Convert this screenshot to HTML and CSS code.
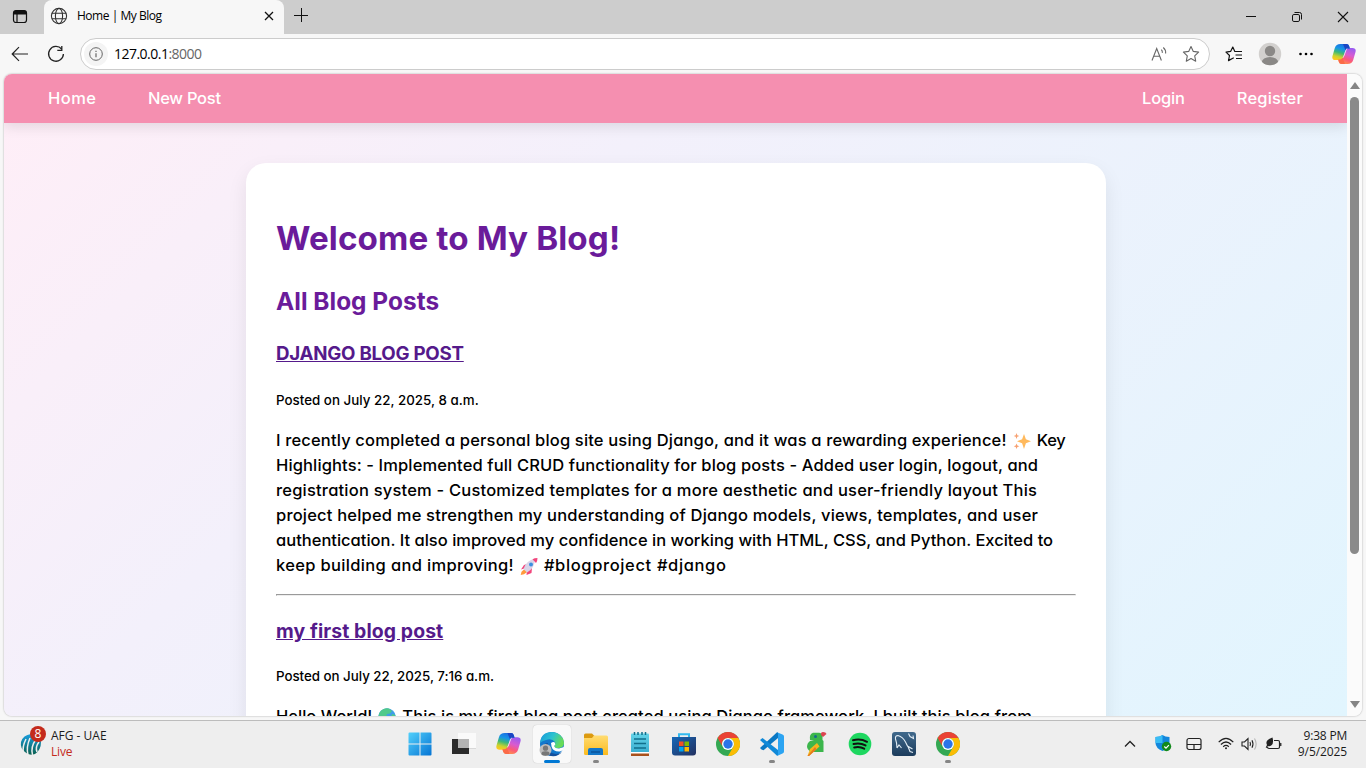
FILE: index.html
```html
<!DOCTYPE html>
<html lang="en">
<head><meta charset="utf-8"><title>Home | My Blog</title><link rel="stylesheet" href="styles.css"></head>
<body>
<svg class="defs" width="0" height="0"><defs>
 <linearGradient id="gc1" x1="0.6" y1="0" x2="0.3" y2="1"><stop offset="0" stop-color="#1b6fe0"/><stop offset=".3" stop-color="#1694e8"/><stop offset=".55" stop-color="#3cb878"/><stop offset=".8" stop-color="#c9d22e"/><stop offset="1" stop-color="#ffc81e"/></linearGradient>
 <linearGradient id="gc2" x1="0.7" y1="0" x2="0.3" y2="1"><stop offset="0" stop-color="#9a5cf0"/><stop offset=".4" stop-color="#d85bd0"/><stop offset=".7" stop-color="#fb5a78"/><stop offset="1" stop-color="#ff9548"/></linearGradient>
 <linearGradient id="gw" x1="0" y1="0" x2="1" y2="1"><stop offset="0" stop-color="#52d0fb"/><stop offset="1" stop-color="#0574d4"/></linearGradient>
 <linearGradient id="ge" x1="0" y1="0" x2="1" y2=".4"><stop offset="0" stop-color="#1696dc"/><stop offset=".55" stop-color="#2bc3cf"/><stop offset="1" stop-color="#68dc58"/></linearGradient>
 <linearGradient id="gf" x1="0" y1="0" x2="0" y2="1"><stop offset="0" stop-color="#ffdc72"/><stop offset="1" stop-color="#fbba1e"/></linearGradient>
 <linearGradient id="gs" x1="0" y1="0" x2="1" y2="1"><stop offset="0" stop-color="#1668b8"/><stop offset="1" stop-color="#23305f"/></linearGradient>
 <linearGradient id="gn" x1="0" y1="0" x2="0" y2="1"><stop offset="0" stop-color="#63d3e8"/><stop offset="1" stop-color="#36aace"/></linearGradient>
 <linearGradient id="gm" x1="0" y1="0" x2="0" y2="1"><stop offset="0" stop-color="#40698c"/><stop offset="1" stop-color="#1c3c5c"/></linearGradient>
 <linearGradient id="gi" x1="0" y1="0" x2="0" y2="1"><stop offset="0" stop-color="#1a9fe0"/><stop offset="1" stop-color="#0a6050"/></linearGradient>
 <g id="copilot">
  <path fill="url(#gc2)" d="M15.500 22H9.500q-2 0-2.600-2l-.7-2.500H8q2 0 2.600-2L13 8.500q.8-2.500 3-2.500h4.500q4 0 3 4l-2.300 8q-1.200 4-5.700 4z"/>
  <path fill="url(#gc1)" d="M8.500 2h6q2 0 2.600 2l.7 2.500H16q-2 0-2.600 2L11 15.500Q10.200 18 8 18H3.500q-4 0-3-4l2.300-8Q4 2 8.500 2z"/>
  <path fill="#1b46c4" d="M11 2h3.500q2 0 2.600 2l.7 2.500H16q-1.800 0-2.500 1.700z"/>
  <path fill="#fb6a48" d="M13 22H9.500q-2 0-2.600-2l-.7-2.500H8q1.800 0 2.500-1.700z"/>
  <path fill="#f4f4f8" d="M13.700 8q.5-1.500 2-1.700-1 .8-1.500 2.400L12.300 14q-.7 2-2 1.900.8-.7 1.200-2z"/>
 </g>
 <g id="chrome">
  <circle cx="12" cy="12" r="12" fill="#34a853"/>
  <path fill="#ea4335" d="M1.600 6A12 12 0 0 1 22.400 6H12a6 6 0 0 0-5.200 9z"/>
  <path fill="#fbbc04" d="M22.400 6A12 12 0 0 1 12 24l5.200-9A6 6 0 0 0 12 6z"/>
  <circle cx="12" cy="12" r="6" fill="#fff"/><circle cx="12" cy="12" r="4.700" fill="#2b74e8"/>
 </g>
</defs></svg>
<div class="desktop">
<header class="tabstrip">
 <div class="tabmenu"><svg width="16" height="16" viewBox="0 0 16 16"><rect x="1.500" y="1.500" width="13" height="12" rx="2.500" fill="none" stroke="#111" stroke-width="1.200"/><path d="M1.500 5.500v-2q0-2 2-2h9q2 0 2 2v2z" fill="#111"/><path d="M5 5v8.500" stroke="#111" stroke-width="1.200"/></svg></div>
 <div class="tab">
  <svg width="18" height="18" viewBox="0 0 18 18" fill="none" stroke="#333" stroke-width="1.100"><circle cx="9" cy="9" r="7.600"/><ellipse cx="9" cy="9" rx="3.600" ry="7.600"/><path d="M2 6.300h14M2 11.700h14"/></svg>
  <span class="tabtitle">Home | My Blog</span>
  <svg width="10" height="10" viewBox="0 0 10 10" stroke="#111" stroke-width="1.300"><path d="M1 1l8 8M9 1L1 9"/></svg>
 </div>
 <svg class="plus" width="14" height="14" viewBox="0 0 14 14" stroke="#111"><path d="M7.500 0v14M0 7.500h14"/></svg>
 <div class="winbtns">
  <svg width="12" height="12" viewBox="0 0 12 12" stroke="#111"><path d="M1 5.500h10"/></svg>
  <svg width="12" height="12" viewBox="0 0 12 12" fill="none" stroke="#111"><rect x="1.500" y="3.500" width="7" height="7" rx="1.400"/><path d="M3.500 1.500h5q2 0 2 2v5"/></svg>
  <svg width="12" height="12" viewBox="0 0 12 12" stroke="#111" stroke-width="1.100"><path d="M1 1l10 10M11 1L1 11"/></svg>
 </div>
</header>
<div class="toolbar">
 <svg width="18" height="16" viewBox="0 0 18 16" fill="none" stroke="#222" stroke-width="1.200"><path d="M17 8H1.500M8 1.200L1.200 8 8 14.800"/></svg>
 <svg class="reload" width="18" height="18" viewBox="0 0 18 18" fill="none" stroke="#222" stroke-width="1.300"><path d="M14.600 4A7.400 7.400 0 1 0 16.400 9"/><path d="M14.800 1v4.300h-4.500"/></svg>
 <div class="address">
  <span class="info"><svg width="14" height="14" viewBox="0 0 14 14" fill="none" stroke="#666"><circle cx="7" cy="7" r="6.300"/><path d="M7 6.200v4M7 3.700v1.200" stroke-width="1.200"/></svg></span>
  <span class="url">127.0.0.1<span class="port">:8000</span></span>
  <svg class="aloud" width="17" height="16" viewBox="0 0 17 16" fill="none" stroke="#666" stroke-width="1.100"><path d="M1 14.500L5.700 2.500l4.700 12M2.700 10.300h6M10.300 3.700q1.300 1.200 1 3.200M12.300 1.500q2.800 2.500 2.300 6"/></svg>
  <svg width="18" height="18" viewBox="0 0 18 18" fill="none" stroke="#666" stroke-width="1.100" stroke-linejoin="round"><path d="M9 1.500l2.300 4.900 5.300.7-3.900 3.700 1 5.400L9 13.600l-4.700 2.600 1-5.400L1.400 7.100l5.300-.7z"/></svg>
 </div>
 <svg class="favs" width="18" height="18" viewBox="0 0 18 18" fill="none" stroke="#111" stroke-width="1.200" stroke-linejoin="round"><path d="M11 6.500H9.800L7.800 2 5.600 6.400 1 7.100l3.500 3.400-1 5.100 4.300-2.300 1-.5M11 6.500h6M10.500 10h6.500M11 13.500h6"/></svg>
 <svg class="avatar" width="24" height="24" viewBox="0 0 24 24"><clipPath id="av"><circle cx="12" cy="12" r="11.200"/></clipPath><g clip-path="url(#av)"><path fill="#d2d0ce" d="M0 0h24v24H0z"/><circle cx="12" cy="9" r="5.200" fill="#8a8886"/><ellipse cx="12" cy="20.200" rx="8.200" ry="5.200" fill="#8a8886"/></g></svg>
 <svg class="dots" width="16" height="4" viewBox="0 0 16 4"><circle cx="2.500" cy="2" r="1.300"/><circle cx="8" cy="2" r="1.300"/><circle cx="13.500" cy="2" r="1.300"/></svg>
 <svg class="cop" width="24" height="24" viewBox="0 0 24 24"><use href="#copilot"/></svg>
</div>
<div class="window">
 <div class="page">
  <nav class="nav"><a class="home">Home</a><a class="new">New Post</a><a class="login">Login</a><a class="register">Register</a></nav>
  <main class="card">
   <h1>Welcome to My Blog!</h1>
   <h2>All Blog Posts</h2>
   <h3 class="django">DJANGO BLOG POST</h3>
   <small>Posted on July 22, 2025, 8 a.m.</small>
   <p><span class="l1">I recently completed a personal blog site using Django, and it was a rewarding experience!</span><svg class="emoji" viewBox="0 0 30 18"><path fill="#ffb95c" d="M17 2l1.900 5.200L24 9.300l-5.100 2L17 17l-1.900-5.700L10 9.300l5.100-2.100z"/><path fill="#f7a070" d="M9.500 1l.8 2.200 2 .7-2 .8-.8 2.300-.8-2.300-2-.8 2-.7zM9.500 11.500l.9 2 2 .8-2 .8-.9 1.900-.8-1.900-2-.8 2-.8z"/></svg><span class="key">Key</span><br>
   <span class="l2">Highlights: - Implemented full CRUD functionality for blog posts - Added user login, logout, and</span><br>
   <span class="l3">registration system - Customized templates for a more aesthetic and user-friendly layout This</span><br>
   <span class="l4">project helped me strengthen my understanding of Django models, views, templates, and user</span><br>
   <span class="l5">authentication. It also improved my confidence in working with HTML, CSS, and Python. Excited to</span><br>
   <span class="l6">keep building and improving!</span><svg class="emoji" viewBox="0 0 30 18"><path fill="#f2457c" d="M10 8l6-2-4 5-5 1.500zM18 11l-.5 5-5 2 .5-5z"/><path fill="#ff9a3c" d="M10.500 12l3 2.700-3.500 2.600-3.300.7.800-3.300z"/><path fill="#d9d3e8" d="M9.500 12Q12 3.500 21 1.500 21 11 13 15.500z"/><path fill="#f2457c" d="M18.500 2.300q2-1.200 5-1.300 0 3-1.500 5z"/><circle cx="17" cy="7.500" r="2" fill="#3b8fe0"/></svg><span class="tags">#blogproject #django</span></p>
   <hr>
   <h3 class="first">my first blog post</h3>
   <small class="second">Posted on July 22, 2025, 7:16 a.m.</small>
   <p class="hello"><span>Hello World!</span><svg class="emoji" viewBox="0 0 30 18"><circle cx="15" cy="9" r="8.700" fill="#3f9de8"/><path fill="#4fc98b" d="M8 4q3.500-4.500 9-3.500l3 2.500-2 2.500-3 .5-1 4-4-1-3 1q-1-3 1-6zM20 6l3.300 1q.7 4-2.300 7l-2-4z"/></svg><span class="l7">This is my first blog post created using Django framework. I built this blog from</span></p>
  </main>
 </div>
 <div class="scroll"><span class="up"></span><span class="thumb"></span><span class="down"></span></div>
</div>
<footer class="taskbar">
 <div class="widget">
  <div class="score"><svg width="22" height="24" viewBox="0 0 22 24"><path fill="url(#gi)" d="M11 1q8 0 10 8 0 8-6 12-6 2-10-2Q0 15 1 9q2-7 10-8z"/><path d="M3.500 20Q2 14 6 6M8 22Q6 14 10 5M12.500 22q-2-8 3-15M17 19q-2-5 2-10" fill="none" stroke="#eee" stroke-width="1.500"/></svg><span class="badge">8</span></div>
  <div class="match"><span class="teams">AFG - UAE</span><span class="live">Live</span></div>
 </div>
 <div class="apps">
  <div class="app"><svg width="24" height="24" viewBox="0 0 24 24" fill="url(#gw)"><path d="M.5 1.500q0-1 1-1h10v11H.5zM12.500.5h10q1 0 1 1v10h-11zM.5 12.500h11v11h-10q-1 0-1-1zM12.500 12.500h11v10q0 1-1 1h-10z"/></svg></div>
  <div class="app"><svg width="24" height="24" viewBox="0 0 24 24"><path fill="#2b2b2b" d="M0 7h17v15H0z"/><path fill="#fafafa" d="M6 1h18v15H6z"/><path fill="#b4b4b4" d="M6 7h11v9H6z"/><path stroke="#d8d8d8" d="M17 16.500h7"/></svg></div>
  <div class="app"><svg width="25" height="25" viewBox="0 0 24 24"><use href="#copilot"/></svg></div>
  <div class="app active"><svg width="26" height="26" viewBox="0 0 26 26"><circle cx="13" cy="13" r="12" fill="#1277cc"/><path fill="url(#ge)" d="M1 12Q2 1 13 1q11 1 12 11 0 5-6 5-4 0-4-2 2-2 1-4-3-4-9-2-4 1-6 3z"/><path fill="#15509c" d="M9 12q-2 10 8 11 4 0 6-2-4 5-11 4-8-2-8-9 1-4 5-4z"/><path fill="#fff" d="M12 12q3-2 4 0 1 2-1 3 1 2.500 5 2.500l5-1.500q0 3-4 4.500-7 .5-8.500-5-.2-2-.5-3.500z"/><circle cx="6.500" cy="19" r="6" fill="#bcbcbc"/><circle cx="6.500" cy="17.200" r="2.600" fill="#777"/><ellipse cx="6.500" cy="22.500" rx="4" ry="2.200" fill="#777"/></svg><span class="bar"></span></div>
  <div class="app"><svg width="24" height="24" viewBox="0 0 24 24"><path fill="#dc9a10" d="M0 6V3q0-1.500 1.500-1.500H8L10.500 4v3H0z"/><path fill="url(#gf)" d="M0 6h8l2-2.500h12.500q1.500 0 1.500 1.500v18H1.500Q0 23 0 21.500z"/><path fill="#1276c8" d="M4 23v-5q0-2 2-2h11q2 0 2 2v5z"/><path stroke="#0a559c" stroke-width="1.500" d="M7 20h9"/></svg><span class="dot"></span></div>
  <div class="app"><svg width="20" height="24" viewBox="0 0 20 24"><rect x="1" y="1.500" width="18" height="21" rx="1" fill="url(#gn)"/><path fill="#a8511c" d="M1 21h18v3H1z"/><path fill="#fff" d="M1 20h18v1.500H1z"/><path stroke="#116f8c" stroke-width="1.500" d="M4 7h12M4 11.500h12M4 16h12M4.500 0v3M8 0v3M12 0v3M15.500 0v3"/></svg></div>
  <div class="app"><svg width="24" height="24" viewBox="0 0 24 24"><path d="M7 7V2.200h10V7" fill="none" stroke="#31b9ef" stroke-width="2"/><path fill="url(#gs)" d="M0 5h24v15.500q0 3-3 3H3q-3 0-3-3z"/><path fill="#f25022" d="M7 9.500h4.500V14H7z"/><path fill="#7fba00" d="M12.500 9.500H17V14h-4.500z"/><path fill="#00a4ef" d="M7 15h4.500v4.500H7z"/><path fill="#ffb900" d="M12.500 15H17v4.500h-4.500z"/></svg></div>
  <div class="app"><svg width="24" height="24" viewBox="0 0 24 24"><use href="#chrome"/></svg></div>
  <div class="app"><svg width="24" height="24" viewBox="0 0 24 24"><path fill="#0a78c4" d="M18 6L3.500 18.300 1.500 17.500 0 16 17 .3 18 .5z"/><path fill="#1089d8" d="M0 8l2.500-2 15.500 12v5.500l-1 .2z"/><path fill="#2ca4f2" d="M17 .2L22.500 2.500q1.500.7 1.500 2v15q0 1.300-1.500 2L17 24q1-.5 1-2V2q0-1.300-1-1.800z"/></svg><span class="dot"></span></div>
  <div class="app"><svg width="24" height="24" viewBox="0 0 24 24"><path fill="#3cb64c" d="M9 .8h6q3 .2 3.500 3.200v4l1 1v11H10q-6 0-7-5 0-4 3-6l4-1H6Q5 2 9 .8z"/><path fill="#dc4450" d="M17 3q-.5-3 2-3 3 0 3.500 2L19 5z"/><circle cx="11.500" cy="4.500" r="1.500" fill="#176b8e"/><path fill="#f5b51e" d="M13 11l2.500 3.500L5 24H3.500L6 17z"/><path fill="#e6781e" d="M3.500 24l7.500-9 1.500 2.200L5 24z"/></svg></div>
  <div class="app"><svg width="24" height="24" viewBox="0 0 24 24"><circle cx="12" cy="12" r="11.300" fill="#1ed760"/><path d="M5 8.300q7.500-2 14 1.500M5.500 12q6.500-1.700 12 1.400M6.200 15.500q5.500-1.300 10 1.200" fill="none" stroke="#111" stroke-width="2" stroke-linecap="round"/></svg></div>
  <div class="app"><svg width="24" height="24" viewBox="0 0 24 24"><rect width="24" height="24" rx="3" fill="url(#gm)"/><path d="M5 16Q5 11 3.500 7 3 3.500 6 3.500 11 5 13.500 10l2 4 5 3M5 16l2-3 2.500 3M16 14.500l2 5 3 1M16.500 1.500l1.500 3 3.500 2-.5-3" fill="none" stroke="#e2edf5" stroke-width="1.100"/></svg></div>
  <div class="app"><svg width="24" height="24" viewBox="0 0 24 24"><use href="#chrome"/></svg><span class="dot"></span></div>
 </div>
 <div class="tray">
  <svg width="12" height="8" viewBox="0 0 12 8" fill="none" stroke="#222" stroke-width="1.300"><path d="M1 6.500l5-5 5 5"/></svg>
  <svg class="shield" width="17" height="17" viewBox="0 0 17 17"><path fill="#1387dc" d="M7.500 0Q10 2 14.500 2v6q0 5-7 8-7-3-7-8V2Q5 2 7.500 0z"/><path fill="#38bdf5" d="M7.500 0v8H.5V2Q5 2 7.500 0z"/><circle cx="11.500" cy="11.500" r="4.700" fill="#128a1c"/><path d="M9.300 11.500l1.700 1.700 2.900-3" fill="none" stroke="#fff" stroke-width="1.200"/></svg>
  <svg class="pad" width="16" height="14" viewBox="0 0 16 14" fill="none" stroke="#222" stroke-width="1.200"><rect x="1" y="1.500" width="14" height="11" rx="2"/><path d="M1 7.500h14M8 7.500v5"/></svg>
  <svg class="wifi" width="16" height="13" viewBox="0 0 16 13" fill="none" stroke="#222" stroke-width="1.200"><path d="M.7 5.200Q8-2.400 15.300 5.200M2.900 7.500q5.100-5 10.200 0M5.200 9.700q2.800-2.600 5.600 0"/><circle cx="8" cy="11.300" r="1" fill="#222" stroke="none"/></svg>
  <svg class="sound" width="17" height="14" viewBox="0 0 17 14" fill="none" stroke="#222" stroke-width="1.100"><path d="M1 5v4h2.500L7 12.500v-11L3.500 5z"/><path d="M9 5q1 2 0 4M11 3.300q2 3.700 0 7.400"/><path stroke="#b5b5b5" d="M13.500 1.500q3.300 5.500 0 11"/></svg>
  <svg class="battery" width="17" height="14" viewBox="0 0 17 14" fill="none" stroke="#222" stroke-width="1.200"><path d="M9 3.500h4q1.500 0 1.500 1.500v5q0 1.500-1.500 1.500H4q-1.500 0-1.500-1.500M15.800 6v3"/><path fill="#222" stroke="none" d="M7.500.5Q9 6 6.500 8.300q-2 1.400-3.500.7L1.500 11l-.8-.5L2 8Q-.5 3 7.500.5z"/></svg>
  <div class="clock"><span>9:38 PM</span><span class="date">9/5/2025</span></div>
 </div>
</footer>
</div>
</body></html>
```
FILE: styles.css
```css
*{box-sizing:border-box}
body{margin:0;font-family:"Open Sans",sans-serif;overflow:hidden}
svg{flex-shrink:0}
.defs{position:absolute}
.desktop{width:1366px;height:768px;background:#f7f7f7;display:flex;flex-direction:column}

.tabstrip{height:34px;background:#cdcdcd;display:flex;align-items:center}
.tabmenu{width:44px;height:34px;padding:8px 12px}
.tab{width:240px;height:34px;background:#f7f7f7;border-radius:8px 8px 0 0;display:flex;align-items:center;padding:0 10.5px 2px 6px}
.tabtitle{font-size:12px;letter-spacing:-.476px;margin-left:9px;padding-bottom:1px;flex:1}
.plus{margin:-4px 0 0 10px}
.winbtns{margin-left:auto;display:flex;gap:34px;padding-right:17px}

.toolbar{height:40px;display:flex;align-items:center;padding-left:11px}
.reload{margin-left:18px}
.address{width:1130px;height:32px;margin-left:15px;border:1px solid #ccc;border-radius:16px;background:#fff;display:flex;align-items:center;padding:0 9px 0 3px}
.info{width:24px;height:24px;border-radius:12px;background:#f4f4f4;display:flex;align-items:center;justify-content:center}
.url{font-size:14px;letter-spacing:-.52px;flex:1;margin-left:6px;padding-bottom:1px}
.port{color:#666}
.aloud{margin-right:14px}
.favs{margin-left:15px}
.avatar{margin-left:15px}
.dots{margin-left:16px}
.cop{margin-left:18px}

.window{margin:0 4px 4px;height:642px;flex-shrink:0;display:flex;overflow:hidden;border-radius:8px;box-shadow:0 0 2px rgba(0,0,0,.35)}
.page{width:1343px;background:linear-gradient(135deg,#ffeef7,#f3f0fb 35%,#e1f5fe);overflow:hidden;font-family:Inter,sans-serif;font-feature-settings:"cv11"}
.nav{height:49px;background:#f58fb0;color:#fff;display:flex;align-items:center;padding:0 44px 2px;font-size:16.5px;font-weight:500;box-shadow:0 4px 12px rgba(0,0,0,.1)}
.home{letter-spacing:.45px}
.new{letter-spacing:-.25px;margin-left:51.5px}
.login{letter-spacing:-.15px;margin-left:auto}
.register{letter-spacing:.15px;margin-left:52px}
.card{width:860px;margin:40px 0 0 242px;height:700px;background:#fff;border-radius:20px;padding:51px 30px;box-shadow:0 8px 20px rgba(0,0,0,.08)}
h1,h2,h3,p,small{margin:0;display:block;white-space:nowrap}
h1{font-size:33.2px;line-height:48px;color:#6a1b9a;letter-spacing:.12px}
h2{font-size:24.4px;line-height:36px;margin-top:21px;color:#6a1b9a;letter-spacing:.03px}
h3{font-size:18.72px;line-height:28px;margin-top:21px;color:#551a8b;text-decoration:underline}
.django{letter-spacing:-.249px}
.first{font-size:19.4px;letter-spacing:.1px}
small{font-size:13.33px;line-height:20px;margin-top:22px;font-weight:500;letter-spacing:.02px}
.second{margin-top:21px;letter-spacing:-.025px}
p{font-size:16.5px;line-height:25px;margin-top:18px;font-weight:500}
hr{margin:16px 0 20px}
.hello{height:25px}
.l1{letter-spacing:.162px}
.l2{letter-spacing:.127px}
.l3{letter-spacing:.205px}
.l4{letter-spacing:.194px}
.l5{letter-spacing:.003px}
.l6{letter-spacing:.337px}
.l7{letter-spacing:.085px}
.key{letter-spacing:-.2px}
.tags{letter-spacing:.637px}
.emoji{width:30px;height:18px;vertical-align:-4px}

.scroll{width:15px;background:#fbfbfb;display:flex;flex-direction:column;align-items:center;padding:8px 0}
.up,.down{border:5px solid transparent}
.up{border-top:0;border-bottom:7px solid #858585}
.down{border-bottom:0;border-top:7px solid #858585;margin-top:auto}
.thumb{width:9px;height:457px;margin-top:8px;border-radius:5px;background:#8a8a8a}

.taskbar{height:48px;border-top:1px solid #bcbcbc;background:#eee;display:flex;align-items:center;padding-bottom:2px;font-size:12px;line-height:16px;color:#1b1b1b}
.widget{width:398px;display:flex;padding-left:20px}
.score{width:31px;height:32px;position:relative;padding-top:5px}
.badge{position:absolute;left:10px;top:-2px;width:16px;height:16px;border-radius:8px;background:#c42b1c;color:#fff;font-size:12px;line-height:16px;text-align:center}
.match{display:flex;flex-direction:column}
.teams{letter-spacing:0}
.live{color:#c42b1c;letter-spacing:-.2px}
.apps{display:flex}
.app{width:44px;height:46px;display:flex;align-items:center;justify-content:center;position:relative}
.active{background:#f9f9f9;width:38px;height:38px;margin:4px 3px;border-radius:4px;box-shadow:0 0 1px rgba(0,0,0,.25)}
.bar,.dot{position:absolute;height:3px;border-radius:2px}
.bar{width:16px;left:11px;bottom:0;background:#0078d4}
.dot{width:6px;left:19px;bottom:4px;background:#858585}
.tray{margin-left:auto;display:flex;align-items:center;padding-right:19px}
.shield{margin-left:19px}
.pad{margin-left:14px}
.wifi{margin-left:16px}
.sound{margin-left:7px}
.battery{margin-left:7px}
.clock{width:65px;display:flex;flex-direction:column;align-items:flex-end;letter-spacing:-.2px}
.date{letter-spacing:-.1px}
```
